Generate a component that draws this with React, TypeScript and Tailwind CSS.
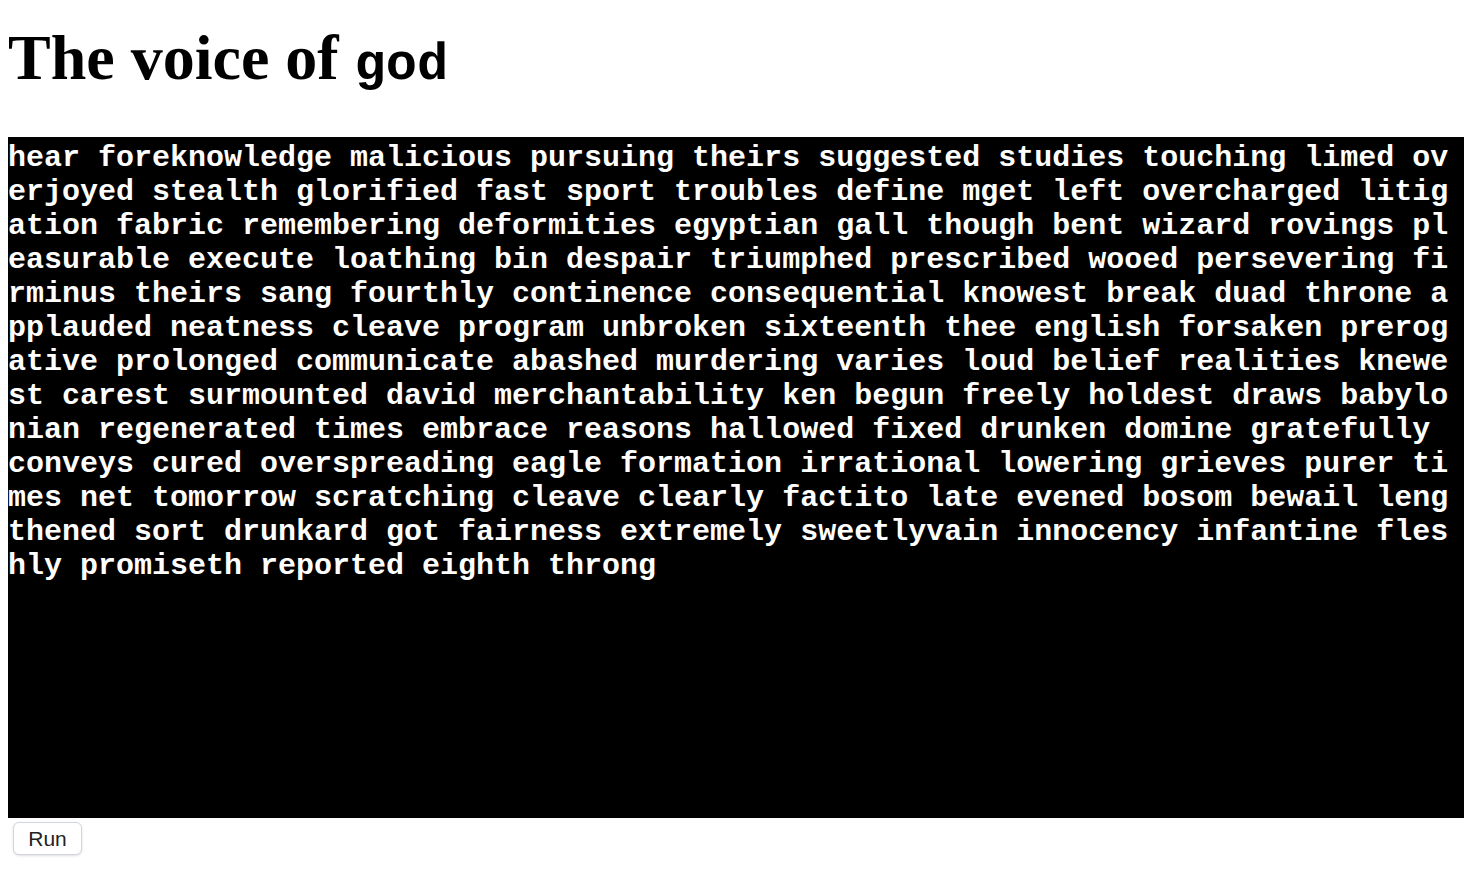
const TEXT =
  "hear foreknowledge malicious pursuing theirs suggested studies touching limed ov" +
  "erjoyed stealth glorified fast sport troubles define mget left overcharged litig" +
  "ation fabric remembering deformities egyptian gall though bent wizard rovings pl" +
  "easurable execute loathing bin despair triumphed prescribed wooed persevering fi" +
  "rminus theirs sang fourthly continence consequential knowest break duad throne a" +
  "pplauded neatness cleave program unbroken sixteenth thee english forsaken prerog" +
  "ative prolonged communicate abashed murdering varies loud belief realities knewe" +
  "st carest surmounted david merchantability ken begun freely holdest draws babylo" +
  "nian regenerated times embrace reasons hallowed fixed drunken domine gratefully " +
  "conveys cured overspreading eagle formation irrational lowering grieves purer ti" +
  "mes net tomorrow scratching cleave clearly factito late evened bosom bewail leng" +
  "thened sort drunkard got fairness extremely sweetlyvain innocency infantine fles" +
  "hly promiseth reported eighth throng";

export default function App() {
  return (
    <div className="min-h-screen bg-white px-2 text-black">
      <h1 className="mt-[21px] mb-[34px] font-['Liberation_Serif',serif] text-[64px] font-bold leading-[74px]">
        The voice of{" "}
        <code className="font-['Liberation_Mono',monospace] text-[52px] font-bold">god</code>
      </h1>
      <div className="-mr-2 h-[681px] bg-black pt-1 font-['Liberation_Mono',monospace] text-[30px] font-bold leading-[34px] text-white break-all">
        {TEXT}
      </div>
      <button className="mt-[4px] ml-[5px] h-[33px] w-[69px] rounded-md border border-gray-300 bg-white font-['Liberation_Sans',sans-serif] text-[21px] text-[#222] shadow-sm">
        Run
      </button>
    </div>
  );
}
